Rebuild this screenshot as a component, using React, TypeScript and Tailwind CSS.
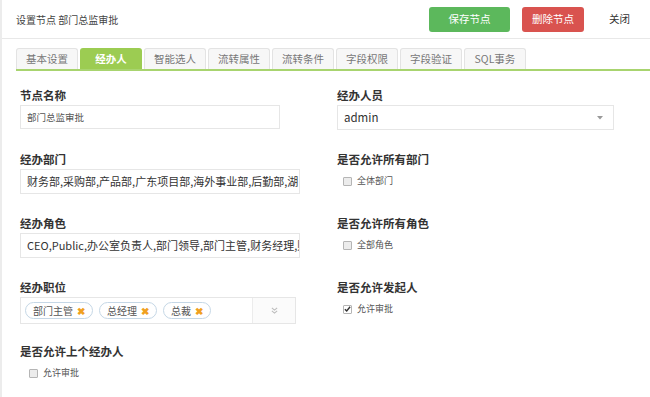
import React from "react";

const font = { fontFamily: '"Noto Sans CJK SC", "Liberation Sans", sans-serif' };

const tabs = ["基本设置", "经办人", "智能选人", "流转属性", "流转条件", "字段权限", "字段验证", "SQL事务"];

function Label({ children }: { children: React.ReactNode }) {
  return (
    <div className="h-[18px] leading-[16px] text-[11.5px] font-bold text-[#333]">{children}</div>
  );
}

function Check({ label, checked, indent }: { label: string; checked?: boolean; indent: string }) {
  return (
    <div className={`mt-[4px] flex items-center gap-[5px] h-[16px] ${indent}`}>
      <span
        className={`w-[9px] h-[9px] shrink-0 rounded-[1px] border border-[#b5b5b5] flex items-center justify-center ${
          checked ? "bg-white" : "bg-[#ececec]"
        }`}
      >
        {checked && (
          <svg width="8" height="8" viewBox="0 0 8 8">
            <path d="M1 4.2 L3.1 6.3 L7 1.4" stroke="#333" strokeWidth="1.6" fill="none" />
          </svg>
        )}
      </span>
      <span className="text-[9px] leading-[12px] text-[#555]">{label}</span>
    </div>
  );
}

function Tag({ text }: { text: string }) {
  return (
    <div className="h-[17px] px-[7px] rounded-full border border-[#c5d7e6] flex items-center gap-[4px] text-[10px] text-[#555]">
      <span>{text}</span>
      <span className="text-[#f0a020] font-bold text-[10px] leading-none">✖</span>
    </div>
  );
}

export default function App() {
  return (
    <div className="w-[650px] h-[397px] bg-white overflow-hidden border-l-2 border-[#ececec]" style={font}>
      {/* header */}
      <div className="h-[39px] flex items-center pl-[14px] pr-[20px] border-b border-[#e8e8e8]">
        <div className="text-[10px] text-[#444] flex-1">设置节点 部门总监审批</div>
        <button className="w-[81px] h-[25px] rounded-[3px] bg-[#5cb85c] text-white text-[10.5px]">保存节点</button>
        <button className="ml-[12px] w-[62px] h-[25px] rounded-[3px] bg-[#d9534f] text-white text-[10.5px]">删除节点</button>
        <button className="ml-[25px] text-[10.5px] text-[#333]">关闭</button>
      </div>

      {/* tabs */}
      <div className="mt-[9px] ml-[14px] flex gap-[2px] border-b-2 border-[#a8d46f]">
        {tabs.map((t, i) =>
          i === 1 ? (
            <div
              key={t}
              className="w-[62px] h-[21px] rounded-t-[3px] bg-[#9ccc52] text-white font-bold text-[10.5px] flex items-center justify-center"
            >
              {t}
            </div>
          ) : (
            <div
              key={t}
              className="w-[62px] h-[21px] rounded-t-[3px] border border-b-0 border-[#e3e3e3] bg-[#f7f7f7] text-[#777] text-[10.5px] flex items-center justify-center"
            >
              {t}
            </div>
          )
        )}
      </div>

      {/* form */}
      <div className="mt-[16px] pl-[18px] grid grid-cols-[280px_277px] gap-x-[37px] auto-rows-[64px]">
        <div>
          <Label>节点名称</Label>
          <div className="w-[260px] h-[24px] border border-[#e6e6e6] px-[6px] flex items-center text-[9.5px] text-[#555]">
            部门总监审批
          </div>
        </div>
        <div>
          <Label>经办人员</Label>
          <div className="h-[25px] border border-[#e6e6e6] pl-[6px] pr-[10px] flex items-center justify-between text-[11.5px] text-[#333]">
            <span>admin</span>
            <svg width="6" height="4" viewBox="0 0 6 4">
              <path d="M0 0 L6 0 L3 3.5 Z" fill="#999" />
            </svg>
          </div>
        </div>

        <div>
          <Label>经办部门</Label>
          <div className="h-[25px] border border-[#e6e6e6] px-[6px] flex items-center text-[11px] text-[#333] overflow-hidden whitespace-nowrap">
            财务部,采购部,产品部,广东项目部,海外事业部,后勤部,湖
          </div>
        </div>
        <div>
          <Label>是否允许所有部门</Label>
          <Check label="全体部门" indent="ml-[6px]" />
        </div>

        <div>
          <Label>经办角色</Label>
          <div className="h-[25px] border border-[#e6e6e6] px-[6px] flex items-center text-[11px] text-[#333] overflow-hidden whitespace-nowrap">
            CEO,Public,办公室负责人,部门领导,部门主管,财务经理,财
          </div>
        </div>
        <div>
          <Label>是否允许所有角色</Label>
          <Check label="全部角色" indent="ml-[6px]" />
        </div>

        <div>
          <Label>经办职位</Label>
          <div className="w-[276px] h-[27px] border border-[#e6e6e6] flex">
            <div className="flex-1 flex items-center gap-[6px] pl-[4px]">
              <Tag text="部门主管" />
              <Tag text="总经理" />
              <Tag text="总裁" />
            </div>
            <div className="w-[43px] border-l border-[#ececec] bg-[#fbfbfb] flex items-center justify-center">
              <svg width="7" height="7" viewBox="0 0 8 8">
                <path d="M1 1 L4 3.5 L7 1 M1 4.5 L4 7 L7 4.5" stroke="#bbb" strokeWidth="1.2" fill="none" />
              </svg>
            </div>
          </div>
        </div>
        <div>
          <Label>是否允许发起人</Label>
          <Check label="允许审批" checked indent="ml-[6px]" />
        </div>

        <div>
          <Label>是否允许上个经办人</Label>
          <Check label="允许审批" indent="ml-[9px]" />
        </div>
        <div />
      </div>
    </div>
  );
}
